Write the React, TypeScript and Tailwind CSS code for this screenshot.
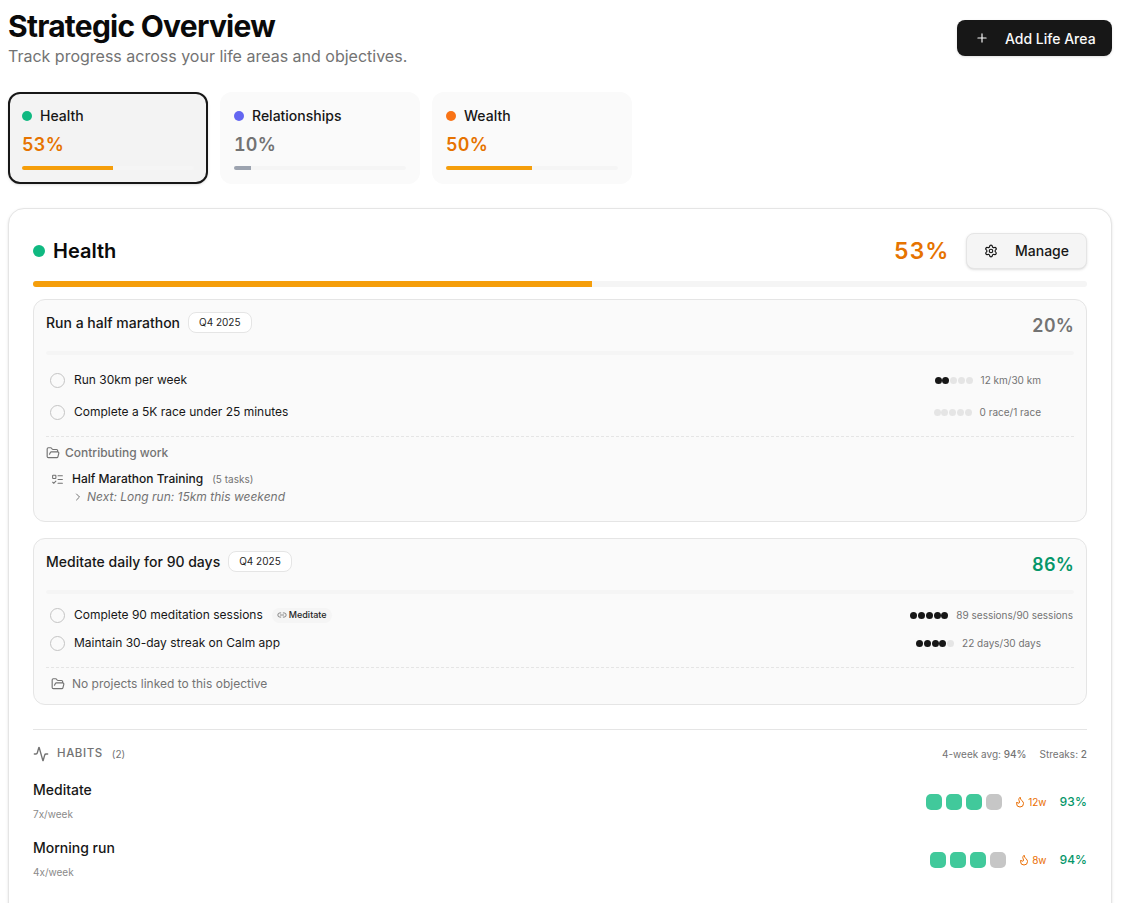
import { Activity, Flame, FolderOpen, ListTodo, ChevronRight, Plus, Settings, Link2 } from 'lucide-react';

type Kr = { label: string; filled: number; value: string; badge?: string };

const tabs = [
  { name: 'Health', pct: 53, dot: 'bg-[#10b981]', text: 'text-[#e67300]', bar: 'bg-[#f59e0b]', barW: 'w-[53%]', active: true },
  { name: 'Relationships', pct: 10, dot: 'bg-[#6366f1]', text: 'text-[#737373]', bar: 'bg-[#9ca3af]', barW: 'w-[10%]', active: false },
  { name: 'Wealth', pct: 50, dot: 'bg-[#f97316]', text: 'text-[#e67300]', bar: 'bg-[#f59e0b]', barW: 'w-[50%]', active: false },
];

function Dots({ filled }: { filled: number }) {
  return (
    <div className="flex gap-[0.75px]">
      {[0, 1, 2, 3, 4].map((i) => (
        <span key={i} className={`h-[7px] w-[7px] rounded-full ${i < filled ? 'bg-[#171717]' : 'bg-[#e5e5e5]'}`} />
      ))}
    </div>
  );
}

function KrRow({ kr, rowH, wide }: { kr: Kr; rowH: string; wide?: boolean }) {
  return (
    <div className={`flex items-center justify-between pl-[4px] ${rowH}`}>
      <div className="flex items-center gap-2">
        <span className="h-[15px] w-[15px] rounded-full border-[1.5px] border-[#c4c4c4]" />
        <span className="ml-[1px] text-[12px] text-[#171717]">{kr.label}</span>
        {kr.badge && (
          <span className="ml-[1px] flex h-[15px] items-center gap-[2px] rounded-full bg-[#f5f5f5] px-[5px] text-[9px] font-medium text-[#262626]">
            <Link2 size={10} className="text-[#737373]" />
            {kr.badge}
          </span>
        )}
      </div>
      <div className={`flex items-center gap-2 ${wide ? 'pr-[1px]' : 'pr-[33px]'}`}>
        <Dots filled={kr.filled} />
        <span className="text-[10px] text-[#737373]">{kr.value}</span>
      </div>
    </div>
  );
}

function Habit({ name, freq, streak, pct }: { name: string; freq: string; streak: string; pct: string }) {
  return (
    <div className="flex h-[58px] items-start justify-between">
      <div>
        <div className="text-[14px] font-medium leading-[20px] text-[#171717]">{name}</div>
        <div className="mt-[7px] text-[10px] leading-[14px] text-[#8a8a8a]">{freq}</div>
      </div>
      <div className="flex h-[44px] items-center">
        <div className="flex gap-1">
          <span className="h-4 w-4 rounded-[5px] bg-[#41c99b]" />
          <span className="h-4 w-4 rounded-[5px] bg-[#41c99b]" />
          <span className="h-4 w-4 rounded-[5px] bg-[#41c99b]" />
          <span className="h-4 w-4 rounded-[5px] bg-[#c6c6c6]" />
        </div>
        <div className="ml-[12px] flex items-center gap-[2px] text-[10px] text-[#ea6c00]">
          <Flame size={12} />
          {streak}
        </div>
        <div className="ml-[13px] text-[12px] font-medium tabular-nums text-[#059669]">{pct}</div>
      </div>
    </div>
  );
}

export default function App() {
  return (
    <div className="h-[903px] overflow-hidden bg-white pl-2 pr-[11px] font-['Inter',sans-serif]">
      <header className="flex items-start justify-between pt-[6px]">
        <div>
          <h1 className="text-[30px] font-bold leading-[40px] tracking-tight text-[#0a0a0a]">Strategic Overview</h1>
          <p className="text-[16px] leading-[20px] text-[#737373]">Track progress across your life areas and objectives.</p>
        </div>
        <button className="mt-[14px] flex h-9 w-[155px] items-center rounded-lg bg-[#171717] pl-[18px] text-[14px] font-medium text-[#fafafa] shadow-sm">
          <Plus size={14} />
          <span className="ml-[16px]">Add Life Area</span>
        </button>
      </header>

      <div className="mt-[26px] flex gap-3">
        {tabs.map((t) => (
          <div
            key={t.name}
            className={`h-[92px] w-[200px] rounded-xl px-3 pt-[12px] ${t.active ? 'border-2 border-[#171717] bg-[#f3f3f3] shadow-sm' : 'border-2 border-transparent bg-[#fafafa]'}`}
          >
            <div className="flex items-center gap-2">
              <span className={`h-[10px] w-[10px] rounded-full ${t.dot}`} />
              <span className="text-[14px] font-medium leading-[20px] text-[#171717]">{t.name}</span>
            </div>
            <div className={`mt-[5px] text-[18px] font-semibold leading-[28px] tracking-[0.01em] tabular-nums ${t.text}`}>{t.pct}%</div>
            <div className="mt-[7px] h-1 overflow-hidden rounded-full bg-[#f5f5f5]">
              <div className={`h-full ${t.bar} ${t.barW}`} />
            </div>
          </div>
        ))}
      </div>

      <section className="mt-6 h-[800px] rounded-2xl border border-[#e5e5e5] bg-white px-6 pt-6 shadow-sm">
        <div className="flex h-9 items-center justify-between">
          <div className="flex items-center gap-2">
            <span className="h-3 w-3 rounded-full bg-[#10b981]" />
            <h2 className="text-[20px] font-semibold text-[#0a0a0a]">Health</h2>
          </div>
          <div className="flex items-center gap-[17px]">
            <span className="text-[23px] font-semibold tracking-[0.03em] tabular-nums text-[#e67300]">53%</span>
            <button className="flex h-9 w-[121px] items-center rounded-lg border border-[#e5e5e5] bg-[#f5f5f5] pb-[1px] pl-[17px] text-[14px] font-medium text-[#171717] shadow-sm">
              <Settings size={14} />
              <span className="ml-[17px]">Manage</span>
            </button>
          </div>
        </div>
        <div className="mt-3 h-[6px] overflow-hidden rounded-full bg-[#f5f5f5]">
          <div className="h-full w-[53%] bg-[#f59e0b]" />
        </div>

        <div className="mt-3 h-[223px] rounded-xl border border-[#e5e5e5] bg-[#fafafa] px-3 pt-[12px]">
          <div className="flex h-[20px] items-center justify-between">
            <div className="flex items-center gap-2">
              <span className="text-[14px] font-medium text-[#171717]">Run a half marathon</span>
              <span className="flex h-[21px] items-center rounded-lg border border-[#e5e5e5] bg-white px-[10px] text-[10px] font-normal text-[#262626]">Q4 2025</span>
            </div>
            <span className="mt-[7px] text-[18px] font-semibold tracking-[0.01em] tabular-nums text-[#737373]">20%</span>
          </div>
          <div className="mt-[19px] h-1 rounded-full bg-[#f5f5f5]" />
          <div className="mt-[9px]">
            <KrRow rowH="h-8" kr={{ label: 'Run 30km per week', filled: 2, value: '12 km/30 km' }} />
            <KrRow rowH="h-8" kr={{ label: 'Complete a 5K race under 25 minutes', filled: 0, value: '0 race/1 race' }} />
          </div>
          <div className="mt-[8px] border-t border-dashed border-[#e5e5e5] pt-[8px]">
            <div className="flex h-4 items-center gap-[5px] text-[12px] font-medium text-[#737373]">
              <FolderOpen size={14} />
              Contributing work
            </div>
            <div className="mt-[9px] flex items-center pl-[5px]">
              <ListTodo size={13} className="text-[#737373]" />
              <span className="ml-[8px] text-[12px] font-medium text-[#171717]">Half Marathon Training</span>
              <span className="ml-[9px] text-[10px] text-[#737373]">(5 tasks)</span>
            </div>
            <div className="flex items-center pl-[26px] text-[12px] italic text-[#737373]">
              <ChevronRight size={12} className="mr-[3px]" />
              Next: Long run: 15km this weekend
            </div>
          </div>
        </div>

        <div className="mt-4 h-[167px] rounded-xl border border-[#e5e5e5] bg-[#fafafa] px-3 pt-[12px]">
          <div className="flex h-[20px] items-center justify-between">
            <div className="flex items-center gap-2">
              <span className="text-[14px] font-medium text-[#171717]">Meditate daily for 90 days</span>
              <span className="flex h-[21px] items-center rounded-lg border border-[#e5e5e5] bg-white px-[10px] text-[10px] font-normal text-[#262626]">Q4 2025</span>
            </div>
            <span className="mt-[7px] text-[18px] font-semibold tracking-[0.01em] tabular-nums text-[#059669]">86%</span>
          </div>
          <div className="mt-[19px] h-1 rounded-full bg-[#f5f5f5]" />
          <div className="mt-[7px]">
            <KrRow rowH="h-7" wide kr={{ label: 'Complete 90 meditation sessions', filled: 5, value: '89 sessions/90 sessions', badge: 'Meditate' }} />
            <KrRow rowH="h-7" kr={{ label: 'Maintain 30-day streak on Calm app', filled: 4, value: '22 days/30 days' }} />
          </div>
          <div className="mt-[10px] flex items-center gap-[7px] border-t border-dashed border-[#e5e5e5] pl-[5px] pt-[7px] text-[12px] text-[#737373]">
            <FolderOpen size={14} />
            No projects linked to this objective
          </div>
        </div>

        <div className="mt-6 border-t border-[#e5e5e5] pt-[15px]">
          <div className="flex h-[18px] items-center justify-between">
            <div className="flex items-center text-[#737373]">
              <Activity size={16} />
              <span className="ml-[8px] text-[11.5px] font-medium tracking-wider">HABITS</span>
              <span className="ml-[9px] text-[10px]">(2)</span>
            </div>
            <div className="flex gap-[13px] text-[10px] text-[#737373]">
              <span>4-week avg: <span className="font-medium">94%</span></span>
              <span>Streaks: <span className="font-medium">2</span></span>
            </div>
          </div>
          <div className="mt-[17px]">
            <Habit name="Meditate" freq="7x/week" streak="12w" pct="93%" />
            <Habit name="Morning run" freq="4x/week" streak="8w" pct="94%" />
          </div>
        </div>
      </section>
    </div>
  );
}
